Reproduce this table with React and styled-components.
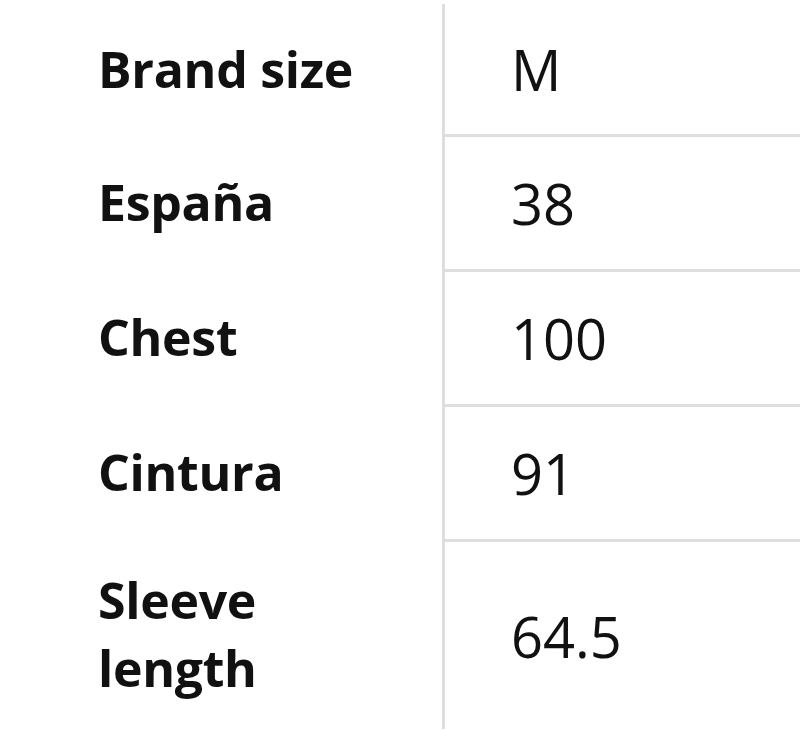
import React from 'react';
import styled, { createGlobalStyle } from 'styled-components';

const GlobalStyle = createGlobalStyle`
  body {
    margin: 0;
    background: #fff;
    font-family: "Open Sans", "Liberation Sans", sans-serif;
    color: #111;
  }
`;

const rows = [
  { label: 'Brand size', value: 'M' },
  { label: 'España', value: '38' },
  { label: 'Chest', value: '100' },
  { label: 'Cintura', value: '91' },
  { label: 'Sleeve length', value: '64.5', tall: true },
];

const App = () => (
  <>
    <GlobalStyle />
    <StyledTable>
      {rows.map((row, index) => (
        <StyledRow key={row.label} tall={row.tall} first={index === 0}>
          <StyledLabel>{row.label}</StyledLabel>
          <StyledValue first={index === 0}>{row.value}</StyledValue>
        </StyledRow>
      ))}
    </StyledTable>
  </>
);

export default App;

const StyledTable = styled.div`
  width: 800px;
  height: 730px;
  overflow: hidden;
  padding-top: 4px;
  box-sizing: border-box;
`;

const StyledRow = styled.div`
  display: grid;
  grid-template-columns: 442px 1fr;
  height: ${(props) => (props.tall ? '190px' : props.first ? '130px' : '135px')};
`;

const StyledLabel = styled.div`
  display: flex;
  align-items: center;
  padding: 0 60px 0 98px;
  font-size: 50px;
  font-weight: 700;
  line-height: 68px;
  letter-spacing: -0.3px;
  color: #111;
`;

const StyledValue = styled.div`
  display: flex;
  align-items: center;
  padding-left: 66px;
  border-left: 3px solid #dedede;
  border-top: ${(props) => (props.first ? 'none' : '3px solid #dedede')};
  font-size: 56px;
  font-weight: 400;
  color: #111;
`;
